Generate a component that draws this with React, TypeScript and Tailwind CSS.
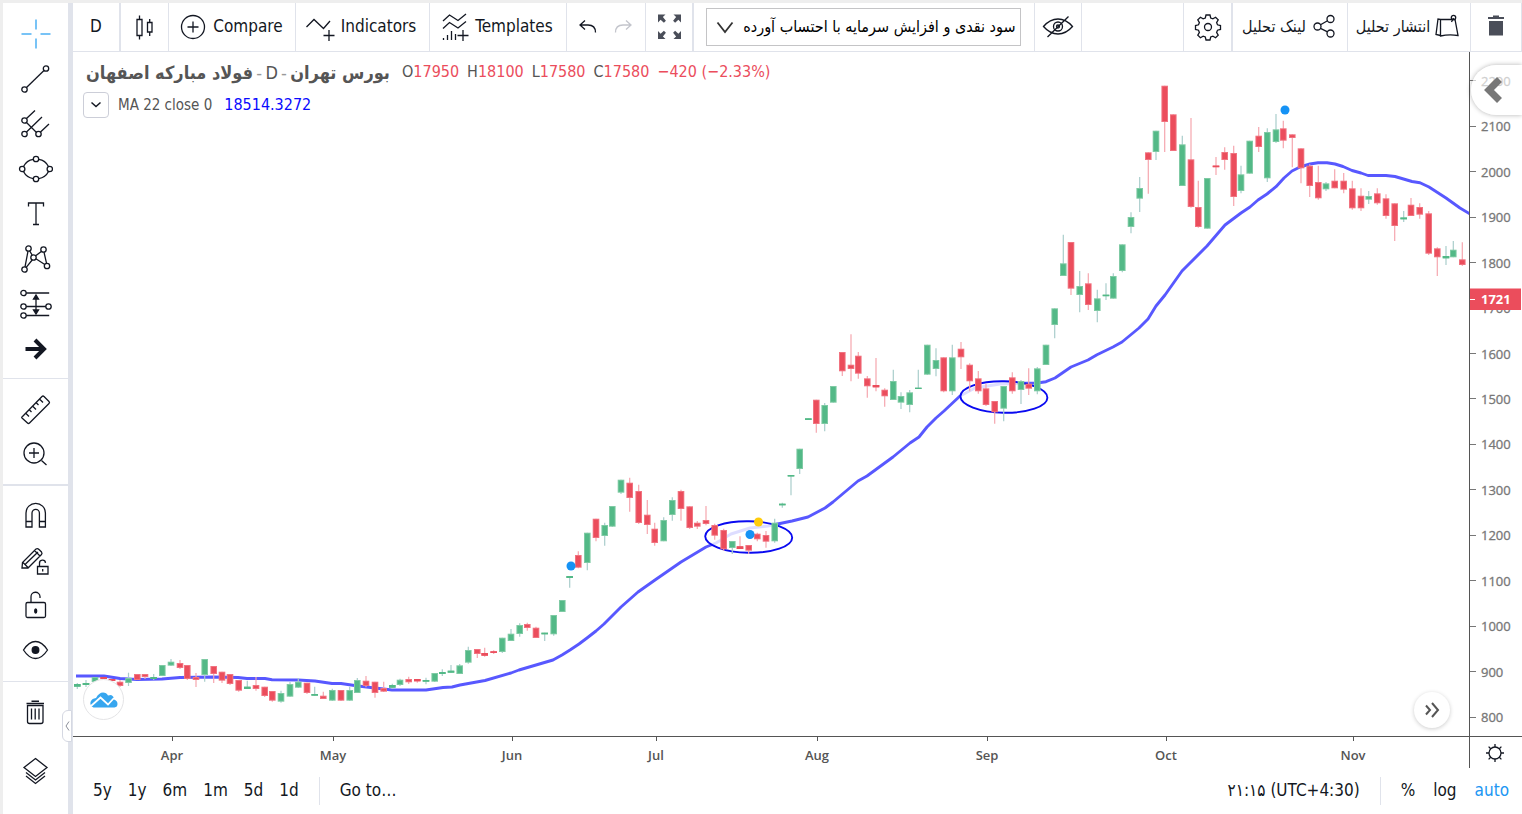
import React from "react";

type Candle = [x: number, high: number, top: number, bottom: number, low: number, kind: "g" | "r"];

const candles: Candle[] = [
  [77.3, 683, 684, 686.7, 689, "g"], [86, 680, 683, 685, 687, "g"], [95, 677, 677, 682, 682, "g"],
  [103.7, 677, 677, 679, 679, "r"], [112, 679, 679, 681, 681, "r"], [120, 680, 681.7, 686, 687, "r"],
  [128.5, 672.7, 678, 683, 686, "g"], [137.3, 674, 674, 680, 680, "r"], [145, 674, 674, 677, 679, "r"],
  [153.7, 674, 677, 679, 680, "g"], [162.3, 665, 665, 676, 676, "g"], [171, 659, 661.7, 665.7, 666, "g"],
  [180, 660, 663, 668, 669, "r"], [187.3, 665, 665, 679, 680, "r"], [196, 673, 677, 680, 687, "r"],
  [204.7, 659, 659, 675, 681.7, "g"], [213.7, 666, 666, 674, 683, "r"], [222, 671.7, 671.7, 680.7, 683, "r"],
  [230, 674, 674, 684, 685, "r"], [238.7, 680, 680, 690.7, 691.7, "r"], [247.3, 680.7, 686.7, 689, 689, "g"],
  [256, 677, 685, 689, 690.7, "r"], [264.7, 686.7, 686.7, 696, 697, "r"], [272.3, 691, 691, 700.7, 701.7, "r"],
  [281, 690.7, 693, 701.7, 702.7, "g"], [290, 682, 684, 696.7, 697, "g"], [298.3, 678, 681.7, 687.7, 688, "g"],
  [307, 682.7, 682.7, 693, 694, "r"], [314.7, 686.7, 694, 695.7, 696, "g"], [323.3, 691.7, 695.7, 699, 699, "r"],
  [332.3, 688.7, 690, 700.7, 701, "g"], [341, 690, 690, 700.7, 701, "r"], [349.7, 686.7, 690, 700.7, 701, "g"],
  [357.3, 678, 680, 693, 693, "g"], [366, 676, 680.7, 686, 687.3, "r"], [375, 681.7, 681.7, 693, 697.7, "r"],
  [383.7, 681.7, 688, 691.7, 692, "r"], [392.3, 683.7, 685, 687.7, 689, "g"], [400, 678.7, 679.7, 685, 686, "g"],
  [408.7, 676.7, 679, 682.3, 684, "r"], [417.3, 679, 679, 681.3, 682.7, "r"], [426, 677.7, 680, 681.7, 684.3, "g"],
  [434.7, 673, 673, 681.7, 682, "g"], [442.3, 669.3, 672, 674, 676, "g"], [451, 665, 670.7, 672.7, 673, "g"],
  [459.7, 664, 665.3, 674, 674, "g"], [468.3, 646.7, 650, 662.7, 663.7, "g"], [477.3, 649, 649, 654, 658, "r"],
  [484.7, 647.7, 653, 655.7, 656.7, "r"], [493.7, 650.3, 651.3, 652.9, 654, "r"], [502.3, 637.7, 637.7, 652, 653, "g"],
  [511, 629, 633.7, 641, 641, "g"], [519.7, 623.3, 625, 634, 636.7, "g"], [527.3, 622.7, 624, 628, 630.7, "r"],
  [536, 626.7, 627.7, 638, 638, "r"], [544.7, 632.7, 632.7, 634.3, 641, "g"], [553.7, 615, 615, 634.3, 635.7, "g"],
  [562.3, 600, 600, 612, 612, "g"], [569.7, 576, 576, 578, 587.7, "g"], [578.3, 551.3, 555, 567.7, 568.3, "r"],
  [587.3, 532.7, 532.7, 563, 570.3, "g"], [596, 518.7, 518.7, 538, 541.3, "r"], [604.7, 522.7, 525, 536, 545.7, "g"],
  [612.3, 506, 506, 526.7, 527, "g"], [621, 479.7, 479.7, 492.7, 494, "g"], [629.7, 477.7, 482.7, 498, 511.7, "r"],
  [638.7, 484.7, 491, 523, 524, "r"], [647.3, 500, 514.7, 525, 534, "r"], [654.7, 522.7, 528.7, 543, 545.7, "r"],
  [663.7, 517.3, 520, 541.3, 541.3, "g"], [672.3, 497.3, 500, 515, 520.7, "g"], [681, 489.7, 491, 509, 520.7, "r"],
  [689.7, 506.3, 506.3, 528, 529, "r"], [697.3, 521, 522.7, 526.7, 529, "r"], [706, 506, 520, 524, 525.3, "r"],
  [714.7, 523.7, 525, 535.7, 539.7, "r"], [723.7, 528.7, 530, 549.3, 550.7, "r"], [732.3, 541, 541, 548, 554, "g"],
  [740, 536.3, 546.3, 549, 549, "r"], [748.7, 545, 545, 550.7, 554, "r"], [757.3, 532.7, 533.7, 539.3, 541.3, "r"],
  [766, 531, 535, 541.7, 547.7, "r"], [774.7, 518.7, 522.7, 541.3, 542.7, "g"], [782.3, 502.7, 503.7, 505.3, 507.7, "g"],
  [791, 475, 475, 476.5, 495.3, "g"], [799.7, 448.7, 448.7, 469, 474, "g"], [808.3, 418.3, 418.3, 420, 420, "g"],
  [816.3, 399.7, 399.7, 424, 432.7, "r"], [824.7, 403, 405, 424, 431.3, "g"], [833.3, 386, 386, 402.7, 402.7, "g"],
  [842.3, 352, 352, 371.3, 376, "r"], [851, 334.3, 364.7, 369, 381.3, "r"], [858.3, 352, 355.7, 373.7, 378.7, "r"],
  [867.3, 376, 378.3, 386.3, 397.7, "r"], [876, 358, 385, 387.3, 391.3, "r"], [884.7, 388.3, 389.7, 396.3, 406.7, "r"],
  [893.3, 369.7, 381, 400, 400, "g"], [901, 392.3, 396, 402.7, 409, "g"], [909.7, 390, 392.3, 405, 412.3, "g"],
  [918.3, 369.7, 387.7, 389, 389, "g"], [927.3, 344.7, 344.7, 374.7, 375, "g"], [936, 348.3, 360, 369, 376.3, "g"],
  [943.7, 357.3, 357.3, 391.3, 392.3, "r"], [952.3, 344.7, 357.3, 391.3, 395, "g"], [961, 342, 348.7, 357.3, 369, "r"],
  [969.7, 363.3, 364.7, 381.3, 391.3, "r"], [978.3, 371, 378.3, 391.3, 393.7, "r"], [986, 383.7, 388.3, 405, 406, "r"],
  [994.7, 401, 401, 412.3, 423.7, "r"], [1003.7, 386, 386, 408.7, 421.3, "g"], [1012.3, 372.3, 377.3, 391.3, 393.7, "r"],
  [1021, 380, 381, 390, 404, "g"], [1028.7, 368.3, 383.7, 388.7, 395, "r"], [1037.3, 367, 368.3, 391.3, 394.3, "g"],
  [1046, 344.7, 344.7, 365, 365, "g"], [1054.7, 308.3, 308.3, 325, 338.3, "g"], [1063.3, 234.7, 263.3, 276, 276, "g"],
  [1071, 242, 242, 288.7, 295, "r"], [1079.7, 271, 286, 295, 312.3, "g"], [1088.3, 273.3, 283.3, 305, 310, "r"],
  [1097.3, 289.7, 298.3, 311, 322.3, "g"], [1106, 283.3, 294.7, 296.2, 300, "g"], [1113.3, 273.3, 276, 298.7, 298.7, "g"],
  [1122.3, 244.3, 244.3, 271, 272.3, "g"], [1131, 212.3, 217, 227, 233.3, "g"], [1139.7, 177, 188, 198.7, 212, "g"],
  [1148.3, 152.3, 152.3, 160, 193.7, "r"], [1156, 130.7, 130.7, 152, 160, "g"], [1164.7, 85.7, 85.7, 122, 152, "r"],
  [1173.3, 114.3, 114.3, 151, 151, "r"], [1182.3, 135.7, 144.3, 186, 186, "g"], [1191, 118, 159.3, 207, 207.7, "r"],
  [1198.3, 180.7, 207, 227, 227.7, "r"], [1207.3, 178, 178, 228.7, 228.7, "g"], [1216, 157, 165.6, 167.2, 175, "r"],
  [1224.7, 147.3, 152, 160, 169.7, "r"], [1233.7, 145.7, 153, 197, 206, "r"], [1241, 165.7, 174.3, 191, 193.3, "g"],
  [1249.7, 140.7, 140.7, 173.7, 173.7, "g"], [1258.7, 127, 135.7, 147, 152, "r"], [1267.3, 128.3, 132, 178.3, 182, "g"],
  [1276, 114, 129.3, 142, 143, "g"], [1283.3, 120.7, 128.3, 140.7, 148.3, "r"], [1292.3, 134.3, 134.3, 138, 167.3, "r"],
  [1301, 148.3, 148.3, 168.3, 183.3, "r"], [1309.7, 164.3, 165.7, 186, 197, "r"], [1318.3, 165.7, 182, 198.3, 199.7, "r"],
  [1326, 182, 183.3, 189.3, 191, "g"], [1334.7, 169.3, 180.7, 188.3, 188.3, "r"], [1343.7, 173, 180.7, 189.7, 193.3, "r"],
  [1352.3, 180.7, 188.3, 208.3, 209.7, "r"], [1361, 188.3, 195.7, 208.3, 211, "r"], [1368.7, 191, 196, 199.7, 204, "g"],
  [1377.3, 188.3, 193.3, 203.3, 204.7, "r"], [1386, 194.3, 198.3, 216, 218.7, "r"], [1394.7, 203.3, 203.3, 226, 241, "r"],
  [1403.7, 211, 217.5, 219.3, 222, "g"], [1411, 198, 204.7, 216, 216, "r"], [1419.7, 203.3, 207, 214.7, 218.7, "r"],
  [1428.7, 211, 213.3, 253.7, 255, "r"], [1437.3, 247.3, 248.3, 257.3, 276, "r"], [1446, 246, 256, 258.3, 265, "g"],
  [1453.3, 241, 249.7, 257.3, 257.3, "g"], [1462.3, 242.3, 259.3, 265, 266, "r"],
];

const average =
  "76,676 104,676 120,678.5 137,679.5 162,679 180,677.5 213,677 238,677.5 247,678.5 265,678.5 272,679.7 298,680 315,681 332,683.5 341,683.5 358,686 375,688 392,690 426,690 443,687.5 452,687 460,685 485,680.5 511,673 519,670 536,665 553,660 562,655 570,650 579,644 587,638 596,631 604,624 621,607 638,592 655,580 681,562 706,547 716,543 731,534 750,528 768,526 792,521 808,517 825,508 833,502 858,481 867,476 893,457 910,443 919,437 927,427 936,418 944,411 960,396 975,388 1000,384 1037,383 1046,381.7 1055,378 1071,367 1088,360 1097,354.7 1113,347 1122,342 1139,328 1148,319 1156,306 1165,295 1182,271 1207,246 1225,225 1233,219 1241,213 1250,207 1258,200 1267,194 1276,186.7 1284,178 1292,171 1300,167 1310,164 1318,162.7 1327,162.7 1335,164 1343,166.5 1352,170.5 1361,173 1368,175.5 1386,175.5 1395,176.5 1412,181.5 1420,182.7 1429,187 1446,198 1460,208 1470,214";

const months: [string, number][] = [
  ["Apr", 172], ["May", 333], ["Jun", 512], ["Jul", 656], ["Aug", 817], ["Sep", 987], ["Oct", 1166], ["Nov", 1353],
];
const prices = [2200, 2100, 2000, 1900, 1800, 1700, 1600, 1500, 1400, 1300, 1200, 1100, 1000, 900, 800];
const priceY = (p: number) => 717.5 - ((p - 800) / 100) * 45.43;

function Icon({ size = 32, children }: { size?: number; children: React.ReactNode }) {
  return (
    <svg width={size} height={size} viewBox={`0 0 ${size} ${size}`} fill="none" stroke="currentColor" strokeWidth="1.3" aria-hidden="true" className="shrink-0">
      {children}
    </svg>
  );
}

function Tool({ label, children }: { label: string; children: React.ReactNode }) {
  return (
    <button aria-label={label} className="flex h-[45px] w-full shrink-0 items-center justify-center pr-0.5">
      <Icon size={36}>{children}</Icon>
    </button>
  );
}

function Sidebar() {
  return (
    <nav aria-label="Drawing tools" className="relative flex w-[70px] shrink-0 flex-col border-r-[5px] border-[#e0e3eb] text-[#131722]">
      <div className="border-b border-[#e0e3eb] pt-2 pb-[7px]">
        <Tool label="Crosshair">
          <path d="M19 3.5v10M19 22.5v10M4.5 18h10M23.5 18h10" stroke="#4cb0f3" strokeWidth="1.5" />
        </Tool>
        <Tool label="Trend line">
          <circle cx="7.5" cy="28.5" r="2.7" /><circle cx="29" cy="7.5" r="2.7" /><path d="M9.5 26.5 27 9.5" />
        </Tool>
        <Tool label="Pitchfork">
          <circle cx="7.5" cy="14.5" r="2.7" /><circle cx="7.5" cy="28" r="2.7" /><circle cx="21.5" cy="28" r="2.7" />
          <path d="M9.5 12.5 18 4.5M9.5 16.5 19.5 26.5M9.5 26 25 11M23.5 26 32 18" />
        </Tool>
        <Tool label="Ellipse">
          <circle cx="19" cy="8" r="2.7" /><circle cx="19" cy="28" r="2.7" /><circle cx="5.2" cy="18" r="2.7" /><circle cx="32.8" cy="18" r="2.7" />
          <path d="M6.5 15.5C8.5 11.500 12 9 16.300 8.400M21.700 8.400C26 9 29.500 11.500 31.500 15.500M31.500 20.500C29.500 24.500 26 27 21.700 27.600M16.300 27.600C12 27 8.500 24.500 6.500 20.500" />
        </Tool>
        <Tool label="Text">
          <path d="M11.5 10.5v-3.5h15v3.5M19 7v21M16 28.5h6" />
        </Tool>
        <Tool label="Pattern">
          <circle cx="11.5" cy="7.5" r="2.7" /><circle cx="26.5" cy="8.5" r="2.7" /><circle cx="16.5" cy="16.5" r="2.7" /><circle cx="7.5" cy="28.5" r="2.7" /><circle cx="30" cy="25" r="2.7" />
          <path d="m11 10.200-3 15.600M12.700 10l2.500 4.200M18.700 14.800l5.600-4.400M27 11.200l2.500 11M15.200 19l-6 7.300M18.900 17.800l8.900 5.700" />
        </Tool>
        <Tool label="Long position">
          <circle cx="6.5" cy="7" r="2.7" /><circle cx="6.5" cy="20.5" r="2.7" /><circle cx="31.5" cy="20.5" r="2.7" /><circle cx="6.5" cy="29.5" r="2.7" />
          <path d="M9.200 7h23M9.200 20.500h19.600M9.200 29.500h23M19 11v15" /><path d="m16.500 13 2.500-4 2.500 4zM16.500 24l2.500 4 2.500-4z" fill="currentColor" />
        </Tool>
        <Tool label="Arrow">
          <path d="M8.5 18h17M18 9l9 9-9 9" strokeWidth="4" />
        </Tool>
      </div>
      <div className="border-b-2 border-[#e0e3eb] pt-[7px] pb-2">
        <Tool label="Measure">
          <path d="M5.500 25.500 25 5.500q1-1 2 0L32 10.500q1 1 0 2L12.500 32q-1 1-2 0L5 27q-.8-.8.500-1.500zM9 22.500l3 3M12.500 19l2 2M16 15.500l3 3M19.500 12l2 2M23 8.500l3 3" />
        </Tool>
        <Tool label="Zoom in">
          <circle cx="17" cy="17" r="10" /><path d="M24.500 24.500 29.500 29M12 17h10M17 12v10" />
        </Tool>
      </div>
      <div className="border-b border-[#e0e3eb] pt-1.5 pb-[9px]">
        <Tool label="Magnet">
          <path d="M9 30V16a9.700 9.700 0 0 1 19.400 0v14h-6V16a3.700 3.700 0 0 0-7.400 0v14zM9 24.500h6M22.400 24.500h6" />
        </Tool>
        <Tool label="Stay in drawing mode">
          <path d="m5 26 .5-5.500L19 7q1.500-1 3 .5l2.500 2.500q1 1.500 0 2.500L11 26zM6 20.500l5 5M17.500 8.500l5.500 5.500M8.500 22 21 10" />
          <path d="M20.500 24.500h10.500v7.500h-10.500zM22.500 24.500v-3a3 3 0 0 1 6-.7M25.700 27v2.500" />
        </Tool>
        <Tool label="Lock drawings">
          <rect x="9" y="15.5" width="19.5" height="15" rx="1.5" /><path d="M14 15.500V10a4.500 4.500 0 0 1 9-.5v1.500" /><ellipse cx="18.7" cy="24" rx="1" ry="2" fill="currentColor" />
        </Tool>
        <Tool label="Hide drawings">
          <path d="M6.500 18Q12 9.500 18.500 9.500T30.500 18Q25 26.500 18.500 26.500T6.500 18z" /><circle cx="18.5" cy="18" r="3.3" fill="currentColor" />
        </Tool>
      </div>
      <div className="flex flex-col gap-[14px] pt-[7px]">
        <Tool label="Remove drawings">
          <path d="M9.5 9.5h17.5M14.500 7.200h7.500" strokeWidth="1.6" /><path d="M10.500 11.500v16q0 2 2 2h11.500q2 0 2-2v-16zM14.500 14.500v11M18.200 14.500v11M22 14.500v11" />
        </Tool>
        <Tool label="Object tree">
          <path d="M18.500 5.500 30 14.500 18.500 23.500 7 14.500zM9 19.500l9.500 7.500 9.500-7.500M9 23l9.500 7.500 9.500-7.500" />
        </Tool>
      </div>
      <button aria-label="Collapse toolbar" className="absolute top-[707px] -right-1 flex h-8 w-[10px] items-center justify-center rounded-l-md border border-[#d5d8e2] bg-white text-[#8a8e99]">
        <svg width="5" height="10" viewBox="0 0 5 10" fill="none" stroke="currentColor" aria-hidden="true"><path d="M4 .5 1 5l3 4.500" /></svg>
      </button>
    </nav>
  );
}

const cell = "flex items-center justify-center border-r border-[#e0e3eb]";

function TopBar() {
  return (
    <header className="flex h-[49px] shrink-0 border-b border-[#e0e3eb] text-[17px] text-[#131722]">
      <button className={`${cell} w-12 border-r-2`}>D</button>
      <button aria-label="Candles" className={`${cell} w-12`}>
        <Icon>
          <path d="M8 8.500h5v16H8zM10.500 4.500v4M10.500 24.500v4M18.500 11.500h4.500v9.500h-4.500zM20.700 8v3.500M20.700 21v4" />
        </Icon>
      </button>
      <button className={`${cell} w-[127px] gap-1 pr-1`}>
        <Icon><circle cx="16" cy="16" r="11.5" /><path d="M10.500 16h11M16 10.500v11" /></Icon>
        Compare
      </button>
      <button className={`${cell} w-[134px] gap-1 pr-1`}>
        <Icon><path d="M1.500 16 9 8.500l9.500 9L25 10M18.500 24.500h11M24 19v11" /></Icon>
        Indicators
      </button>
      <button className={`${cell} w-[137px] gap-1 pr-1`}>
        <Icon>
          <path d="M4 10 10.500 4l8.500 5.500L27 3M4 17.500l6.500-6L19 17l8-6.500M18.500 24.500h11M24 19v11M4.500 29v-2M8.500 29v-5M12.500 29v-9M16.500 29v-6" />
        </Icon>
        Templates
      </button>
      <div className={`${cell} w-[79px] gap-1`}>
        <button aria-label="Undo"><Icon><path d="M13 9.500 8 14l5 4.500M8 14h8q7.500 0 7.500 7.500" /></Icon></button>
        <button aria-label="Redo" className="text-[#c3c5cc]"><Icon><path d="m18 9.500 5 4.500-5 4.500M23 14h-8q-7.500 0-7.500 7.500" /></Icon></button>
      </div>
      <button aria-label="Full screen" className={`${cell} w-[48px] border-r-2 text-[#4a4e59]`}>
        <Icon>
          <path d="M5 3.500h7.500l-2.600 2.600 3 3.600-2 2-3.300-3L5 11.500zM28 3.500h-7.500l2.600 2.600-3 3.600 2 2 3.300-3 2.600 2.800zM5 28h7.500l-2.600-2.600 3-3.600-2-2-3.300 3L5 20zM28 28h-7.500l2.600-2.600-3-3.600 2-2 3.300 3L28 20z" fill="currentColor" stroke="none" />
        </Icon>
      </button>
      <div className={`${cell} w-[341px] pr-0.5`}>
        <div className="relative">
          <select aria-label="نوع تعدیل" dir="rtl" className="block h-[38px] w-[315px] appearance-none border border-[#c4c4c6] bg-white pr-1 pl-8 text-[16px] text-black">
            <option>سود نقدی و افزایش سرمایه با احتساب آورده</option>
          </select>
          <svg className="pointer-events-none absolute top-3 left-2.5" width="18" height="16" viewBox="0 0 18 16" fill="none" stroke="#333" strokeWidth="1.8" aria-hidden="true"><path d="m1.500 2.500 7.500 9.500 7.500-9.500" /></svg>
        </div>
      </div>
      <button aria-label="Hide marks" className={`${cell} w-[47px]`}>
        <Icon>
          <path d="M1.500 15.500Q8 8 16 8t14.500 7.500Q24 23 16 23T1.500 15.500zM5.500 26 26.500 5.500" /><circle cx="16" cy="15.5" r="4.5" /><circle cx="16" cy="15.5" r="1.5" />
        </Icon>
      </button>
      <div className={`${cell} flex-1`} />
      <button aria-label="Settings" className={`${cell} w-[49px] border-r-2`}>
        <Icon>
          <circle cx="16" cy="16" r="3.5" />
          <path d="M14 4h4l.7 3 2.200.9 2.700-1.600 2.600 2.600-1.600 2.700.9 2.200 3 .7v4l-3 .7-.9 2.200 1.600 2.700-2.600 2.600-2.700-1.600-2.200.9-.7 3h-4l-.7-3-2.200-.9-2.700 1.600-2.600-2.600 1.600-2.700-.9-2.200-3-.7v-4l3-.7.900-2.200-1.600-2.700 2.600-2.600 2.700 1.600 2.200-.9z" />
        </Icon>
      </button>
      <button dir="rtl" className={`${cell} w-[115px] gap-1 text-[16px]`}>
        <Icon size={28}>
          <circle cx="7.500" cy="13.500" r="3.500" /><circle cx="20.500" cy="6" r="3.500" /><circle cx="20.500" cy="20.500" r="3.500" /><path d="m10.500 11.700 7-4M10.500 15.300l7 3.500" />
        </Icon>
        لینک تحلیل
      </button>
      <button dir="rtl" className={`${cell} w-[123px] gap-1 text-[16px]`}>
        <Icon size={28}>
          <path d="M6.500 6.500h14.500l3 16q-9-1.500-17.500.5zM6.500 6.500 4 6 2 21.500l4.500 1M17.500 9l2-4" /><circle cx="19.500" cy="4.500" r="2.200" />
        </Icon>
        انتشار تحلیل
      </button>
      <button aria-label="Delete" className={`${cell} w-[51px] text-[#4a4e59]`}>
        <Icon><path d="M8 6h5V4.500h6V6h5v2H8zM9 10h14v14.500H9z" fill="currentColor" stroke="none" /></Icon>
      </button>
    </header>
  );
}

function Plot() {
  return (
    <svg viewBox="73 52 1396 684" className="block h-full w-full" role="img" aria-label="Daily price chart">
      <polyline points={average} fill="none" stroke="#5858ff" strokeWidth="2.9" strokeLinejoin="round" />
      {[[748.7, 537], [1003.9, 397]].map(([x, y]) => (
        <ellipse key={x} cx={x} cy={y} rx="43.5" ry="15.8" fill="#fff" fillOpacity=".8" stroke="#0a0af0" strokeWidth="1.9" transform={`rotate(1 ${x} ${y})`} />
      ))}
      {candles.map(([x, high, top, bottom, low, kind]) => {
        const green = kind === "g";
        const thin = bottom - top < 3;
        return (
          <g key={x}>
            <path d={`M${x} ${high}V${low}`} stroke={green ? "#a9cdcb" : "#f5a6ae"} strokeWidth="1.2" />
            <rect x={x - 3.3} y={top} width="6.6" height={bottom - top} fill={green ? "#7fcaa4" : "#f17380"} />
            <rect x={thin ? x - 3.3 : x - 2.3} y={thin ? top : top + 1} width={thin ? 6.6 : 4.6} height={thin ? bottom - top : bottom - top - 2} fill={green ? "#53b987" : "#eb4d5c"} />
          </g>
        );
      })}
      {[[571, 566], [750, 534.5], [1285, 110]].map(([x, y]) => <circle key={x} cx={x} cy={y} r="4.5" fill="#1592f5" />)}
      <circle cx="758.5" cy="522" r="4.5" fill="#ffcc0a" />
    </svg>
  );
}

function PriceAxis() {
  return (
    <svg viewBox="1470 52 52 684" className="block h-full w-full text-[13px]" role="img" aria-label="Price scale">
      {prices.map((p) => (
        <g key={p}>
          <path d={`M1470 ${Math.round(priceY(p)) - 0.5}h6`} stroke="#777" />
          <text x="1481" y={priceY(p) + 4.5} fill="#777" stroke="#777" strokeWidth=".3">{p}</text>
        </g>
      ))}
      <rect x="1470" y="288.5" width="51" height="21.5" fill="#eb4d5c" />
      <path d="M1470 299.500h5" stroke="#fff" />
      <text x="1481" y="304" fill="#fff" className="font-bold">1721</text>
    </svg>
  );
}

const ohlc: [string, string][] = [["O", "17950"], ["H", "18100"], ["L", "17580"], ["C", "17580"]];

export default function App() {
  return (
    <div className="h-screen min-h-[814px] overflow-hidden border-t-[3px] border-l-[3px] border-[#eee] bg-white font-['DejaVu_Sans_Condensed','DejaVu_Sans',sans-serif] text-[#131722]">
      <div className="flex h-full">
        <Sidebar />
        <div className="flex min-w-0 flex-1 flex-col">
          <TopBar />
          <main className="relative flex min-h-0 flex-1">
            <div className="min-w-0 flex-1 border-b border-[#555]"><Plot /></div>
            <div className="w-[53px] shrink-0 border-b border-l border-[#555] font-['Open_Sans',sans-serif]"><PriceAxis /></div>

            <div className="absolute top-1.5 left-[10px] text-[#555]">
              <div className="flex h-7 items-center pl-[3px]">
                <h1 className="flex w-[304px] items-center justify-between text-[18px]">
                  <span lang="fa" className="font-bold">فولاد مبارکه اصفهان</span>
                  <span className="text-[#999]">-</span>
                  <span>D</span>
                  <span className="text-[#999]">-</span>
                  <span lang="fa" className="font-bold">بورس تهران</span>
                </h1>
                <p className="ml-3 flex gap-2 text-[16px]">
                  {ohlc.map(([k, v]) => <span key={k}>{k}<span className="text-[#eb4d5c]">{v}</span></span>)}
                  <span className="text-[#eb4d5c]">−420 (−2.33%)</span>
                </p>
              </div>
              <div className="mt-1.5 flex h-[26px] items-center text-[15px]">
                <button aria-label="Toggle indicators" className="flex h-[26px] w-[26px] items-center justify-center rounded border border-[#ccced8] text-[#131722]">
                  <svg width="12" height="8" viewBox="0 0 12 8" fill="none" stroke="currentColor" strokeWidth="1.5" aria-hidden="true"><path d="m1.500 1.500 4.500 4 4.500-4" /></svg>
                </button>
                <span className="ml-[9px]">MA 22 close 0</span>
                <span className="ml-3 text-[16px] text-[#0a0aff]">18514.3272</span>
              </div>
            </div>

            <div className="absolute bottom-[17px] left-[10px] flex h-[41px] w-[41px] items-center justify-center rounded-full border border-[#e4e4e6] bg-white">
              <svg width="28" height="16" viewBox="0 0 28 16" aria-hidden="true">
                <path d="M3.500 15.500A4.500 4.500 0 0 1 1 9q1-2.500 5-3Q9 .5 13 .5q3.500 0 5 3l3-.5q3 1 3 4.500 3.500 1 3.500 4.500 0 3-3 3.500z" fill="#37a6ef" />
                <path d="m1 14 9.500-8.500 7.500 7 6-6.500" fill="none" stroke="#fff" strokeWidth="1.8" />
              </svg>
            </div>
            <button aria-label="Scroll to latest" className="absolute right-[72px] bottom-[9px] flex h-9 w-9 items-center justify-center rounded-full bg-white text-[#555] shadow-[0_1px_4px_rgba(0,0,0,0.2)]">
              <svg width="16" height="16" viewBox="0 0 16 16" fill="none" stroke="currentColor" strokeWidth="2" aria-hidden="true"><path d="m2 3.500 4 4.500-4 4.500M8 1l6 7-6 7" /></svg>
            </button>
            <button aria-label="Open panel" className="absolute top-[13px] right-0 flex h-[50px] w-[51px] items-center rounded-l-full bg-white/65 pl-3 text-[#777] shadow-[0_0_5px_rgba(0,0,0,0.3)]">
              <svg width="20" height="26" viewBox="0 0 20 26" fill="none" stroke="currentColor" strokeWidth="7" aria-hidden="true"><path d="M16.500 2.500 6 13l10.500 10.500" /></svg>
            </button>
          </main>

          <div className="flex h-[31px] shrink-0">
            <svg viewBox="73 737 1396 31" className="block h-full min-w-0 flex-1 font-['Open_Sans',sans-serif] text-[13px] font-semibold" role="img" aria-label="Time scale">
              {months.map(([m, x]) => (
                <g key={m}>
                  <path d={`M${x + 0.5} 737v4`} stroke="#555" />
                  <text x={x} y="760" textAnchor="middle" fill="#555">{m}</text>
                </g>
              ))}
            </svg>
            <button aria-label="Scale settings" className="flex w-[53px] items-center justify-center border-l border-[#555]">
              <Icon size={22}>
                <circle cx="10" cy="11" r="6" />
                <path d="M10 2v3M10 17v3M1 11h3M16 11h3M3.600 4.600l2.100 2.100M14.300 15.300l2.100 2.100M16.400 4.600l-2.100 2.100M5.700 15.300l-2.100 2.100" />
              </Icon>
            </button>
          </div>

          <footer className="flex h-[46px] shrink-0 items-center justify-between pr-[13px] pl-5 text-[17px]">
            <div className="flex items-center">
              <div className="flex gap-4">
                {["5y", "1y", "6m", "1m", "5d", "1d"].map((r) => <button key={r}>{r}</button>)}
              </div>
              <div className="mx-5 h-7 w-px bg-[#e0e3eb]" />
              <button>Go to…</button>
            </div>
            <div className="flex items-center">
              <button dir="ltr">۲۱:۱۵ (UTC+4:30)</button>
              <div className="mx-5 h-7 w-px bg-[#e0e3eb]" />
              <div className="flex gap-[18px]">
                <button>%</button>
                <button>log</button>
                <button className="text-[#2196f3]">auto</button>
              </div>
            </div>
          </footer>
        </div>
      </div>
    </div>
  );
}
